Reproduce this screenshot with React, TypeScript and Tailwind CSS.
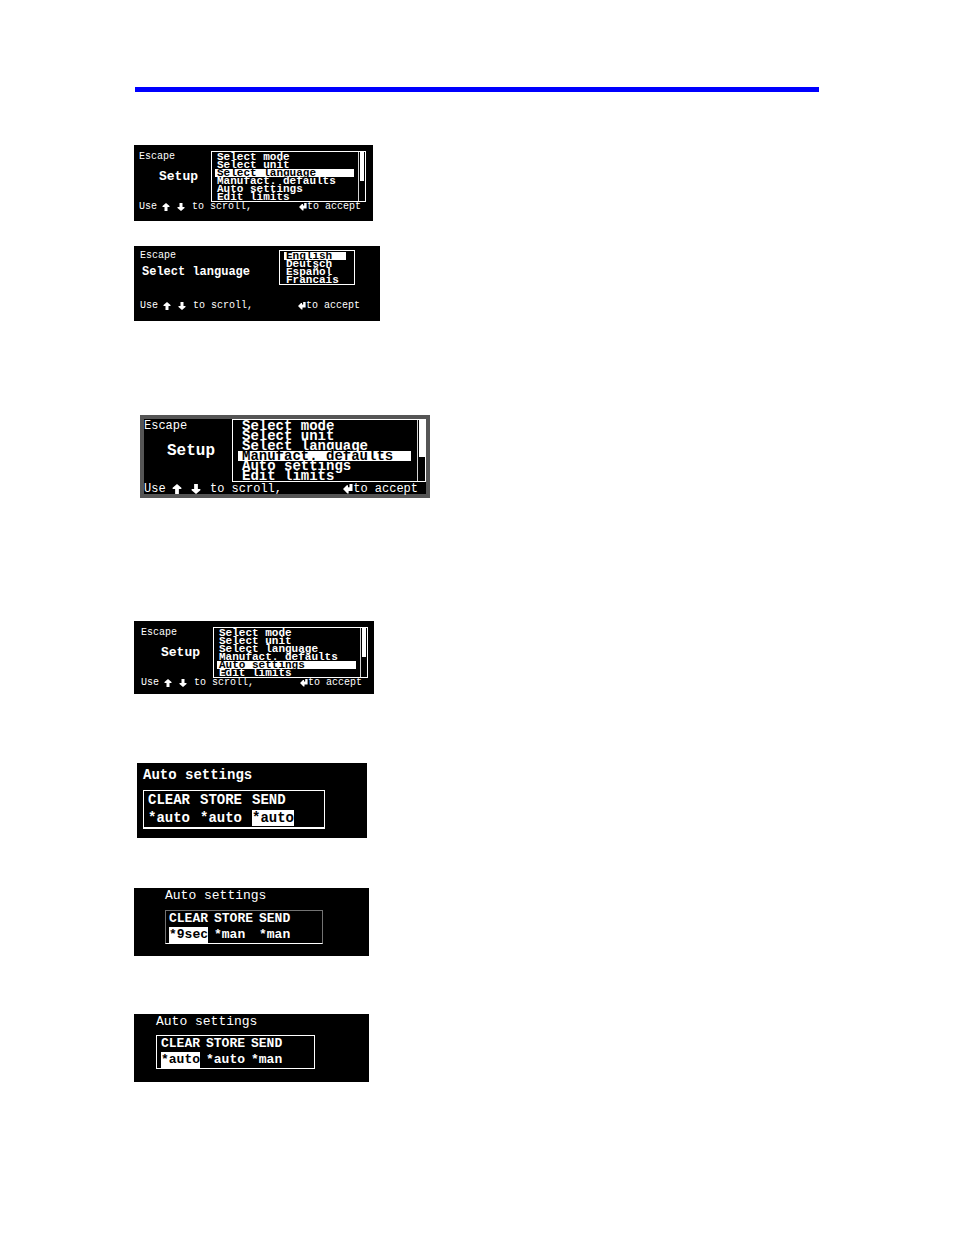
import clsx from "clsx";

const SETUP_ITEMS = [
  "Select mode",
  "Select unit",
  "Select language",
  "Manufact. defaults",
  "Auto settings",
  "Edit limits",
];

const LANGUAGES = ["English", "Deutsch", "Español", "Francais"];

function UpArrow({ className }: { className?: string }) {
  return (
    <svg viewBox="0 0 8 8" className={className} fill="currentColor" aria-hidden="true">
      <path d="M4 0 L7.5 3 V4 H5.5 V8 H2.5 V4 H0.5 V3 Z" />
    </svg>
  );
}

function DownArrow({ className }: { className?: string }) {
  return (
    <svg viewBox="0 0 8 8" className={className} fill="currentColor" aria-hidden="true">
      <path d="M2.5 0 H5.5 V4 H7.5 V5 L4 8 L0.5 5 V4 H2.5 Z" />
    </svg>
  );
}

function EnterArrow({ className }: { className?: string }) {
  return (
    <svg viewBox="0 0 8 8" className={className} fill="currentColor" aria-hidden="true">
      <path d="M0 4 L3 1 H4 V2.5 H5.2 V0 H7.6 V5.5 H4.5 V7.5 H3.5 Z" />
    </svg>
  );
}

/* Bottom line with the key hints */

function Hint({ large, className }: { large?: boolean; className?: string }) {
  const icon = large ? "size-[10px]" : "size-2";

  return (
    <div
      className={clsx(
        "flex items-center whitespace-nowrap",
        large ? "text-[12px] leading-[10px]" : "text-[10px] leading-[10px]",
        className
      )}
    >
      <span className={large ? "w-7" : "w-[23px]"}>Use</span>
      <span className={large ? "w-[19px]" : "w-[15px]"}>
        <UpArrow className={icon} />
      </span>
      <span className={large ? "w-[19px]" : "w-[15px]"}>
        <DownArrow className={icon} />
      </span>
      <span>to scroll,</span>
      <span className="ml-auto flex items-center">
        <EnterArrow className={icon} />
        to accept
      </span>
    </div>
  );
}

type OptionsProps = {
  items: string[];
  selected: string;
  large?: boolean;
  scroll?: boolean;
  className?: string;
};

function Options({ items, selected, large, scroll, className }: OptionsProps) {
  return (
    <div className={clsx("flex shrink-0 border border-white", className)}>
      <ul className="flex-1 pt-px">
        {items.map((item) => (
          <li key={item} className="flex">
            <button
              type="button"
              className={clsx(
                "w-full whitespace-nowrap text-left font-bold",
                large ? "pl-1 text-[14px] leading-[10px]" : "pl-0.5 text-[11px] leading-[8px]",
                item === selected && "bg-white text-black"
              )}
            >
              {item}
            </button>
          </li>
        ))}
      </ul>

      {scroll && (
        <div
          className={clsx(
            "border-l border-neutral-300",
            large ? "ml-1.5 w-2 pl-px" : "ml-1 w-[7px] px-px"
          )}
        >
          <div className="h-3/5 bg-white" />
        </div>
      )}
    </div>
  );
}

type AutoSettingsProps = {
  values: string[];
  selected: number;
  large?: boolean;
  className: string;
  titleClass: string;
  tableClass: string;
};

function AutoSettings({ values, selected, large, className, titleClass, tableClass }: AutoSettingsProps) {
  const cell = large ? "w-[52px] h-[18px] p-0" : "w-[45px] h-4 p-0";

  return (
    <section
      className={clsx("bg-black text-white", large ? "text-[14px]" : "text-[13px]", className)}
    >
      <h2 className={clsx("leading-4", titleClass)}>Auto settings</h2>

      <div className={clsx("border font-bold leading-4", tableClass)}>
        <table className="table-fixed border-collapse text-left">
          <thead>
            <tr>
              {["CLEAR", "STORE", "SEND"].map((name) => (
                <th key={name} scope="col" className={cell}>
                  {name}
                </th>
              ))}
            </tr>
          </thead>
          <tbody>
            <tr>
              {values.map((value, i) => (
                <td key={i} className={cell}>
                  <span className={clsx("block w-fit", i === selected && "bg-white text-black")}>
                    {value}
                  </span>
                </td>
              ))}
            </tr>
          </tbody>
        </table>
      </div>
    </section>
  );
}

export default function App() {
  return (
    <main className="min-h-screen bg-white px-[134px] pb-36 pt-[87px] font-['Liberation_Mono',monospace]">

      <hr className="mx-px h-[5px] border-0 bg-[#0000ff]" />

      {/* Setup, language highlighted */}

      <section className="mt-[53px] w-[239px] bg-black pb-[9px] pl-[5px] pt-1.5 text-white">
        <div className="flex pr-[7px]">
          <div className="flex-1">
            <button type="button" className="block text-[10px] leading-[12px]">Escape</button>
            <h2 className="mt-1.5 pl-5 text-[13px] font-bold leading-4">Setup</h2>
          </div>
          <Options items={SETUP_ITEMS} selected="Select language" scroll className="w-[155px] pl-[3px]" />
        </div>
        <Hint className="pr-3" />
      </section>

      {/* Language list */}

      <section className="mt-[25px] w-[246px] bg-black pb-[10px] pl-1.5 pt-1 text-white">
        <div className="flex pr-[25px]">
          <div className="flex-1 whitespace-nowrap">
            <button type="button" className="block text-[10px] leading-[12px]">Escape</button>
            <h2 className="mt-0.5 pl-0.5 text-[12px] font-bold leading-4">Select language</h2>
          </div>
          <Options items={LANGUAGES} selected="English" className="w-[76px] pl-1 pr-2" />
        </div>
        <Hint className="mt-4 pr-5" />
      </section>

      {/* Setup, defaults highlighted */}

      <section className="ml-1.5 mt-[94px] w-[290px] border-4 border-[#555555] bg-black text-white">
        <div className="flex">
          <div className="flex-1">
            <button type="button" className="block text-[12px] leading-[14px]">Escape</button>
            <h2 className="mt-2 pl-[23px] text-[16px] font-bold leading-5">Setup</h2>
          </div>
          <Options
            items={SETUP_ITEMS}
            selected="Manufact. defaults"
            large
            scroll
            className="w-[194px] pl-[5px]"
          />
        </div>
        <Hint large className="mt-0.5 pr-2" />
      </section>

      {/* Setup, auto settings highlighted */}

      <section className="mt-[123px] w-[240px] bg-black pb-1.5 pl-[7px] pt-1.5 text-white">
        <div className="flex pr-1.5">
          <div className="flex-1">
            <button type="button" className="block text-[10px] leading-[12px]">Escape</button>
            <h2 className="mt-1.5 pl-5 text-[13px] font-bold leading-4">Setup</h2>
          </div>
          <Options items={SETUP_ITEMS} selected="Auto settings" scroll className="w-[155px] pl-[3px]" />
        </div>
        <Hint className="pr-3" />
      </section>

      {/* Auto settings screens */}

      <AutoSettings
        values={["*auto", "*auto", "*auto"]}
        selected={2}
        large
        className="ml-[3px] mt-[69px] w-[230px] pb-[9px] pl-1.5 pt-1"
        titleClass="font-bold"
        tableClass="mt-[7px] w-[182px] border-b-2 border-white pl-1"
      />

      <AutoSettings
        values={["*9sec", "*man", "*man"]}
        selected={0}
        className="mt-[50px] w-[235px] pb-3 pl-[31px]"
        titleClass="font-normal"
        tableClass="mt-1.5 w-[158px] border-neutral-500 border-b-white pl-[3px]"
      />

      <AutoSettings
        values={["*auto", "*auto", "*man"]}
        selected={0}
        className="mt-[58px] w-[235px] pb-[13px] pl-[22px]"
        titleClass="font-normal"
        tableClass="mt-[5px] w-[159px] border-white pl-1"
      />

    </main>
  );
}
